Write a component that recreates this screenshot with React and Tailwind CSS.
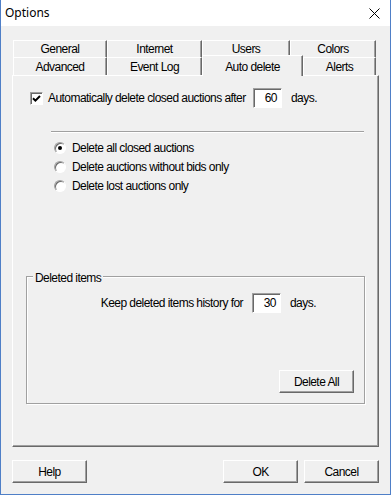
import React from "react";

const F = "font-['Liberation_Sans',Arial,sans-serif] tracking-[-0.55px]";

function Tab({ label, w, selected }) {
  if (selected) {
    return (
      <div
        className={`relative z-10 h-[21px] -mb-[1px] flex justify-center pt-[2px] bg-[#f0f0f0] border-t border-l border-white border-r border-r-[#696969] shadow-[inset_-1px_0_0_#a0a0a0]`}
        style={{ width: w }}
      >
        {label}
      </div>
    );
  }
  return (
    <div
      className="h-full flex items-center justify-center bg-[#f0f0f0] border-t border-l border-white border-r border-r-[#696969] shadow-[inset_-1px_0_0_#a0a0a0]"
      style={{ width: w }}
    >
      {label}
    </div>
  );
}

function Btn({ children, className = "" }) {
  return (
    <div
      className={`h-[23px] w-[75px] flex items-center justify-center bg-[#f0f0f0] border-t border-l border-white border-r border-b border-r-[#696969] border-b-[#696969] shadow-[inset_-1px_-1px_0_#a0a0a0] ${className}`}
    >
      {children}
    </div>
  );
}

function NumBox({ value }) {
  return (
    <div className="w-[29px] h-[20px] bg-white border-t border-l border-[#a0a0a0] border-r border-b border-r-white border-b-white shadow-[inset_1px_1px_0_#696969] flex items-center justify-end pr-[4px]">
      {value}
    </div>
  );
}

function Radio({ checked, label }) {
  return (
    <div className="flex items-center h-[19px]">
      <div className="w-[12px] h-[12px] rounded-full bg-white border border-t-[#a0a0a0] border-l-[#a0a0a0] border-r-white border-b-white shadow-[inset_1px_1px_0_#696969] flex items-center justify-center ml-[41px]">
        {checked && <div className="w-[4px] h-[4px] rounded-full bg-black" />}
      </div>
      <span className="ml-[6px]">{label}</span>
    </div>
  );
}

export default function App() {
  return (
    <div className={`w-[391px] h-[495px] bg-[#f0f0f0] border-l border-r border-b border-[#4f7fc7] flex flex-col text-[12px] text-black ${F}`}>
      <div className="h-[26px] bg-white flex items-center justify-between pl-[4px] pr-[10px] shrink-0 tracking-normal">
        <span className="font-['Noto_Sans','Liberation_Sans',sans-serif] text-[12px] -mt-[1px]">Options</span>
        <svg width="11" height="11" viewBox="0 0 11 11" className="mt-[1px]">
          <path d="M0.5 0.5 L10.5 10.5 M10.5 0.5 L0.5 10.5" stroke="#000" strokeWidth="1" />
        </svg>
      </div>
      <div className="flex-1 flex flex-col pl-[11px] pt-[14px]">
        {/* tabs */}
        <div className="flex h-[17px] ml-[1px]">
          <Tab label="General" w={94} />
          <Tab label="Internet" w={95} />
          <Tab label="Users" w={88} />
          <Tab label="Colors" w={86} />
        </div>
        <div className="flex items-end h-[18px] ml-[1px]">
          <Tab label="Advanced" w={94} />
          <Tab label="Event Log" w={95} />
          <Tab label="Auto delete" w={101} selected />
          <Tab label="Alerts" w={73} />
        </div>
        {/* panel */}
        <div className="w-[367px] h-[372px] border-t border-l border-white border-r border-b border-r-[#696969] border-b-[#696969] shadow-[inset_-1px_-1px_0_#a0a0a0] flex flex-col">
          <div className="flex items-center h-[20px] mt-[12px]">
            <div className="ml-[17px] w-[13px] h-[13px] bg-white border border-t-[#a0a0a0] border-l-[#a0a0a0] border-r-white border-b-white shadow-[inset_1px_1px_0_#696969] flex items-center justify-center">
              <svg width="9" height="9" viewBox="0 0 9 9">
                <path d="M1 4.2 L3.4 6.6 L8 2" stroke="#000" strokeWidth="2" fill="none" />
              </svg>
            </div>
            <span className="ml-[5px] w-[205px] whitespace-nowrap">Automatically delete closed auctions after</span>
            <NumBox value="60" />
            <span className="ml-[9px]">days.</span>
          </div>
          <div className="ml-[38px] w-[313px] h-[2px] mt-[23px] border-t border-[#a0a0a0] border-b border-b-white" />
          <div className="flex flex-col mt-[5px]">
            <Radio checked label="Delete all closed auctions" />
            <Radio label="Delete auctions without bids only" />
            <Radio label="Delete lost auctions only" />
          </div>
          {/* group box */}
          <div className="relative ml-[13px] mt-[81px] w-[339px] h-[128px] border border-[#a0a0a0] shadow-[inset_1px_1px_0_#fff,1px_1px_0_#fff] flex flex-col">
            <span className="absolute -top-[8px] left-[6px] px-[2px] bg-[#f0f0f0]">Deleted items</span>
            <div className="flex items-center h-[20px] mt-[16px]">
              <span className="w-[225px] text-right pr-[9px] whitespace-nowrap">Keep deleted items history for</span>
              <NumBox value="30" />
              <span className="ml-[9px]">days.</span>
            </div>
            <div className="flex-1" />
            <div className="flex justify-end pr-[10px] pb-[10px]">
              <Btn>Delete All</Btn>
            </div>
          </div>
        </div>
        {/* bottom buttons */}
        <div className="flex mt-[13px] w-[367px]">
          <Btn>Help</Btn>
          <div className="flex-1" />
          <Btn>OK</Btn>
          <Btn className="ml-[6px]">Cancel</Btn>
        </div>
      </div>
    </div>
  );
}
